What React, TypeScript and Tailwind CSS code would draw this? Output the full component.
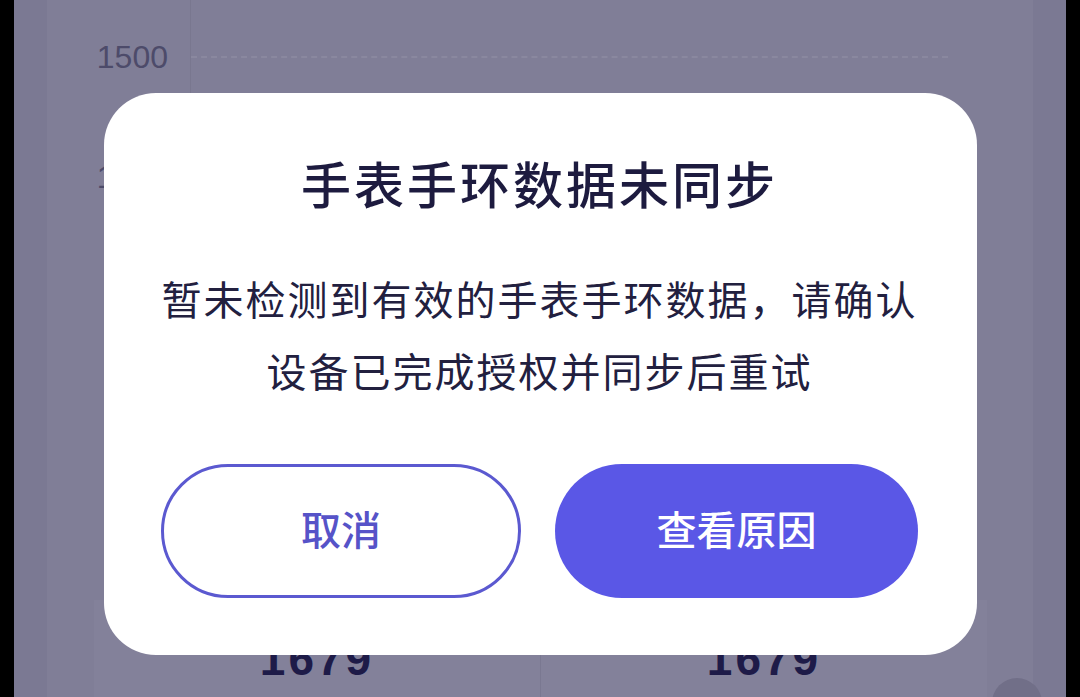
import React from "react";

const cjk = { fontFamily: '"Noto Sans CJK SC", "Noto Sans", sans-serif' };

export default function App() {
  const rows = ["1500", "1000"];

  return (
    <div className="w-[1080px] h-[697px] bg-black flex justify-center overflow-hidden">
      <div className="relative w-[1052px] h-full bg-[#7b7993] px-[33px] overflow-hidden">
        {/* page behind the dim layer */}
        <div className="h-full bg-[#807e97] flex flex-col">
          <div className="h-[600px] flex">
            <div className="w-[143px] flex flex-col pt-[37px] gap-[80px]">
              {rows.map((r) => (
                <div
                  key={r}
                  className="h-[40px] flex items-center justify-end pr-[22px] text-[32px] text-[#4d4b6a]"
                  style={{ fontFamily: '"Liberation Sans", Arial, sans-serif' }}
                >
                  {r}
                </div>
              ))}
            </div>
            <div className="flex-1 border-l border-[#79778f] flex">
              <div className="w-[757px] flex flex-col pt-[37px] gap-[80px]">
                {rows.map((r) => (
                  <div key={r} className="h-[40px] flex items-center">
                    <div className="w-full border-t-2 border-dashed border-[#8a889f]" />
                  </div>
                ))}
              </div>
            </div>
          </div>

          <div className="ml-[47px] w-[893px] flex-1 bg-[#83819a] flex">
            {["1679", "1679"].map((v, i) => (
              <div
                key={i}
                className={`flex-1 flex justify-center pt-[36px] ${i === 1 ? "border-l border-[#7a7891]" : ""}`}
              >
                <span
                  className="text-[46px] leading-none font-bold tracking-[3px] text-[#1e1b48]"
                  style={{ fontFamily: '"Liberation Sans", Arial, sans-serif' }}
                >
                  {v}
                </span>
              </div>
            ))}
          </div>
        </div>

        {/* floating button corner */}
        <div className="absolute left-[978px] top-[678px] w-[50px] h-[50px] rounded-full bg-[#716f88]" />

        {/* dialog */}
        <div
          className="absolute left-[90px] top-[93px] w-[873px] h-[562px] bg-white rounded-[52px] flex flex-col items-center pl-[57px] pr-[59px] pt-[59px] pb-[57px]"
          style={cjk}
        >
          <h2 className="h-[60px] leading-[60px] text-[50px] font-medium tracking-[3px] text-[#1d1b3f]">
            手表手环数据未同步
          </h2>
          <p className="mt-[50px] text-center text-[40px] leading-[72px] tracking-[2px] text-[#22203f]">
            暂未检测到有效的手表手环数据，请确认
            <br />
            设备已完成授权并同步后重试
          </p>
          <div className="mt-auto w-full flex gap-[34px]">
            <button className="w-[360px] h-[134px] pb-[6px] rounded-full border-[3px] border-[#5b59d0] bg-white text-[40px] font-medium text-[#5653c8]">
              取消
            </button>
            <button className="flex-1 h-[134px] pb-[6px] rounded-full bg-[#5a57e6] text-[40px] font-medium text-white">
              查看原因
            </button>
          </div>
        </div>
      </div>
    </div>
  );
}
